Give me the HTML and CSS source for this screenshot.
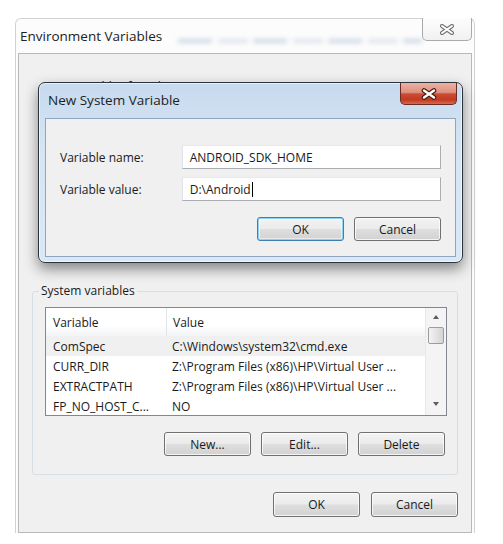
FILE: index.html
```html
<!DOCTYPE html>
<html lang="en">
<head>
  <meta charset="UTF-8">
  <title>Environment Variables</title>
  <link rel="stylesheet" href="styles.css">
</head>
<body>
  <div class="env">
    <div class="env-title">
      <span class="title-text">Environment Variables</span>
      <span class="glass"></span>
      <button class="env-close">
        <svg width="16" height="11" viewBox="0 0 16 11"><path d="M3 2 L13 9 M13 2 L3 9" stroke="#6f6f6f" stroke-width="4" stroke-linecap="round"/><path d="M3 2 L13 9 M13 2 L3 9" stroke="#fff" stroke-width="2" stroke-linecap="round"/></svg>
      </button>
    </div>

    <div class="env-client">
      <div class="user-group">
        <span class="user-label">User variables for admin</span>
      </div>

      <fieldset class="group">
        <legend>System variables</legend>
        <div class="listview">
          <div class="lv-main">
            <div class="lv-head">
              <span class="col-var">Variable</span>
              <span class="col-val">Value</span>
            </div>
            <div class="lv-row hot">
              <span class="col-var">ComSpec</span>
              <span class="col-val">C:\Windows\system32\cmd.exe</span>
            </div>
            <div class="lv-row">
              <span class="col-var">CURR_DIR</span>
              <span class="col-val">Z:\Program Files (x86)\HP\Virtual User ...</span>
            </div>
            <div class="lv-row">
              <span class="col-var">EXTRACTPATH</span>
              <span class="col-val">Z:\Program Files (x86)\HP\Virtual User ...</span>
            </div>
            <div class="lv-row">
              <span class="col-var">FP_NO_HOST_C...</span>
              <span class="col-val">NO</span>
            </div>
          </div>
          <div class="scrollbar">
            <span class="arrow up"></span>
            <span class="thumb"></span>
            <span class="arrow down"></span>
          </div>
        </div>
        <div class="btn-row">
          <button class="btn">New...</button>
          <button class="btn">Edit...</button>
          <button class="btn">Delete</button>
        </div>
      </fieldset>

      <div class="btn-row bottom">
        <button class="btn">OK</button>
        <button class="btn">Cancel</button>
      </div>
    </div>

    <div class="dialog">
      <div class="dlg-title">
        <span class="dlg-title-text">New System Variable</span>
        <button class="dlg-close">
          <svg width="18" height="12" viewBox="0 0 18 12"><path d="M4 2.5 L14 9.5 M14 2.5 L4 9.5" stroke="#4a1a12" stroke-width="4.6" stroke-linecap="round"/><path d="M4 2.5 L14 9.5 M14 2.5 L4 9.5" stroke="#fff" stroke-width="2.4" stroke-linecap="round"/></svg>
        </button>
      </div>
      <div class="dlg-client">
        <div class="form-row">
          <label>Variable name:</label>
          <div class="field">ANDROID_SDK_HOME</div>
        </div>
        <div class="form-row">
          <label>Variable value:</label>
          <div class="field">D:\Android<span class="caret"></span></div>
        </div>
        <div class="btn-row dlg-buttons">
          <button class="btn default">OK</button>
          <button class="btn">Cancel</button>
        </div>
      </div>
    </div>
  </div>
</body>
</html>
```

FILE: styles.css
```css
body {
  margin: 0;
  background: #fff;
  font-family: "Open Sans", "Noto Sans", sans-serif;
  font-size: 12px;
  color: #1a1a1a;
}

button {
  font: inherit;
  color: inherit;
  padding: 0;
}

/* outer window */
.env {
  position: relative;
  margin: 18px 0 0 15px;
  width: 460px;
  height: 515px;
  box-sizing: border-box;
  border: 1px solid #d2d2d2;
  border-bottom: none;
  border-radius: 6px 6px 0 0;
  padding: 0 2px;
  background: #fcfcfc;
  display: flex;
  flex-direction: column;
}
.env-title {
  height: 34px;
  display: flex;
  align-items: flex-start;
}
.title-text {
  font-size: 13.5px;
  margin: 8px 0 0 2px;
  color: #222;
  white-space: nowrap;
}
.glass {
  width: 270px;
  height: 4px;
  margin: 20px 0 0 16px;
  background: repeating-linear-gradient(90deg, #b7c6d8 0 34px, transparent 34px 40px, #cdd7e3 40px 70px, transparent 70px 75px);
  filter: blur(2.5px);
  opacity: .7;
}
.env-close {
  margin-left: auto;
  width: 55px;
  height: 23px;
  margin-top: -1px;
  border: 1px solid #aaa;
  border-top: none;
  border-radius: 0 0 5px 5px;
  background: linear-gradient(#fdfdfd, #f1f1f1);
  display: flex;
  align-items: center;
  justify-content: center;
}

.env-client {
  height: 480px;
  box-sizing: border-box;
  border: 1px solid #b9b9b9;
  background: #f0f0f0;
  padding: 0 13px;
  display: flex;
  flex-direction: column;
}
.user-group {
  height: 229px;
  flex-shrink: 0;
  padding-top: 24px;
  box-sizing: border-box;
}
.user-label {
  padding-left: 13px;
}

.group {
  margin: 0;
  height: 192px;
  flex-shrink: 0;
  box-sizing: border-box;
  border: 1px solid #d5dfe5;
  border-radius: 3px;
  padding: 0 10px 0 12px;
}
.group legend {
  padding: 0 2px;
  margin-left: -6px;
  line-height: 16px;
}

.listview {
  margin-top: 8px;
  height: 109px;
  box-sizing: border-box;
  border: 1px solid #828790;
  background: #fff;
  display: flex;
}
.lv-main {
  flex: 1;
  overflow: hidden;
}
.lv-head,
.lv-row {
  display: flex;
  align-items: center;
}
.lv-head {
  height: 28px;
  background: linear-gradient(#fff 0%, #fff 60%, #f3f4f6 100%);
}
.lv-head .col-var {
  border-right: 1px solid #e3e5e8;
  align-self: stretch;
  display: flex;
  align-items: center;
}
.lv-row {
  height: 20px;
}
.lv-row.hot {
  background: #f0f0f0;
}
.col-var {
  width: 113px;
  padding-left: 7px;
  white-space: nowrap;
}
.col-val {
  padding-left: 6px;
  white-space: nowrap;
}

.scrollbar {
  width: 20px;
  background: #f4f4f4;
  border-left: 1px solid #e8e8e8;
  display: flex;
  flex-direction: column;
  align-items: center;
}
.arrow {
  width: 0;
  height: 0;
  border-left: 3.5px solid transparent;
  border-right: 3.5px solid transparent;
}
.arrow.up {
  margin-top: 7px;
  border-bottom: 4px solid #5e5e5e;
}
.arrow.down {
  margin-top: auto;
  margin-bottom: 9px;
  border-top: 4px solid #5e5e5e;
}
.thumb {
  margin-top: 8px;
  width: 16px;
  height: 17px;
  box-sizing: border-box;
  border: 1px solid #9c9c9c;
  border-radius: 2px;
  background: linear-gradient(90deg, #f3f3f3, #e4e4e4 50%, #d5d5d5);
}

/* buttons */
.btn-row {
  display: flex;
  justify-content: flex-end;
  gap: 10px;
  margin-top: 16px;
  padding-right: 2px;
}
.btn-row.bottom {
  margin-top: 17px;
  gap: 11px;
  padding-right: 0;
}
.btn {
  width: 87px;
  height: 25px;
  box-sizing: border-box;
  border: 1px solid #707070;
  border-radius: 3px;
  background: linear-gradient(#f3f3f3 0%, #ebebeb 48%, #dedede 52%, #d2d2d2 100%);
  box-shadow: inset 0 0 0 1px rgba(255, 255, 255, .75);
}
.group .btn {
  height: 24px;
}
.btn.default {
  border-color: #3c7fb1;
  box-shadow: inset 0 0 0 1px #8fd3f2, inset 0 0 0 2px rgba(255, 255, 255, .5);
}

/* new system variable dialog */
.dialog {
  position: absolute;
  left: 22px;
  top: 63px;
  width: 425px;
  height: 181px;
  box-sizing: border-box;
  border: 1px solid #2c333b;
  border-radius: 7px;
  padding: 0 6px 5px;
  background: linear-gradient(#c7daee 0%, #d6e5f4 40%, #dae8f6 100%);
  box-shadow: 0 6px 14px rgba(0, 0, 0, .45), inset 0 0 0 1px rgba(255, 255, 255, .6);
  display: flex;
  flex-direction: column;
}
.dlg-title {
  height: 35px;
  display: flex;
  align-items: flex-start;
}
.dlg-title-text {
  font-size: 13.5px;
  margin: 8px 0 0 3px;
  color: #1e1e1e;
}
.dlg-close {
  margin-left: auto;
  margin-right: -1px;
  width: 57px;
  height: 22px;
  border: 1px solid #6b2b22;
  border-top: none;
  border-radius: 0 0 5px 5px;
  background: linear-gradient(#eab3a5 0%, #df8f7d 45%, #cb4c35 52%, #c33a22 80%, #d8684e 100%);
  display: flex;
  align-items: center;
  justify-content: center;
}
.dlg-client {
  flex: 1;
  border: 1px solid #8ea6c0;
  background: #f0f0f0;
  padding: 26px 14px 0 14px;
  display: flex;
  flex-direction: column;
  gap: 8px;
}
.form-row {
  display: flex;
  align-items: center;
}
.form-row label {
  width: 122px;
}
.field {
  width: 260px;
  height: 24px;
  box-sizing: border-box;
  border: 1px solid #abadb3;
  border-top-color: #e3e9ef;
  border-left-color: #e2e3ea;
  background: #fff;
  padding: 0 7px;
  display: flex;
  align-items: center;
}
.caret {
  width: 1px;
  height: 15px;
  background: #000;
  margin-left: 1px;
}
.dlg-buttons {
  margin-top: 8px;
  padding-right: 0;
}
.dlg-buttons .btn {
  height: 24px;
}
```
